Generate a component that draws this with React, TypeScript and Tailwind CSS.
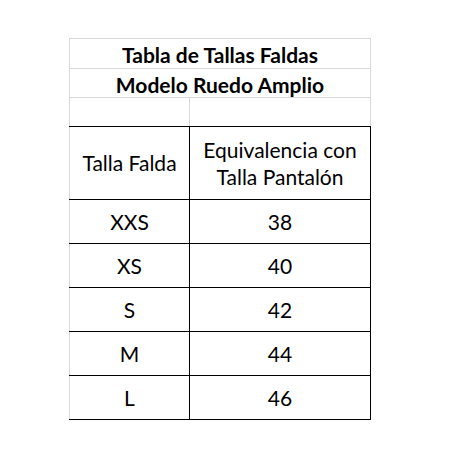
const rows = [
  ["XXS", "38"],
  ["XS", "40"],
  ["S", "42"],
  ["M", "44"],
  ["L", "46"],
];

export default function App() {
  return (
    <div className="min-h-screen w-full bg-white pl-[69px] pt-[38px] text-black font-['Lato',sans-serif]">
      <div className="w-[302px]">
        {/* title rows */}
        <div className="flex h-[30px] items-center justify-center border-x border-t border-[#d9d9d9] pt-[3px] text-[21px] font-bold">
          Tabla de Tallas Faldas
        </div>
        <div className="flex h-[29px] items-center justify-center border-x border-t border-[#d9d9d9] pt-[3px] text-[21px] font-bold">
          Modelo Ruedo Amplio
        </div>
        <div className="flex h-[29px] border-t border-[#d9d9d9]">
          <div className="w-[121px] border-x border-[#d9d9d9]" />
          <div className="w-[181px] border-r border-[#d9d9d9]" />
        </div>

        {/* header */}
        <div className="flex h-[73px] border-t border-black text-[21px]">
          <div className="flex w-[121px] items-center justify-center border-l border-r border-l-[#d9d9d9] border-r-black">
            Talla Falda
          </div>
          <div className="flex w-[181px] items-center justify-center border-r border-black text-center leading-[27px]">
            Equivalencia con
            <br />
            Talla Pantalón
          </div>
        </div>

        {/* data */}
        {rows.map(([size, eq], i) => (
          <div
            key={size}
            className={`flex border-t border-black text-[21px] ${i === rows.length - 1 ? "h-[45px] border-b" : "h-[44px]"}`}
          >
            <div className="flex w-[121px] items-center justify-center border-l border-r border-l-[#d9d9d9] border-r-black">
              {size}
            </div>
            <div className="flex w-[181px] items-center justify-center border-r border-black">
              {eq}
            </div>
          </div>
        ))}
      </div>
    </div>
  );
}
